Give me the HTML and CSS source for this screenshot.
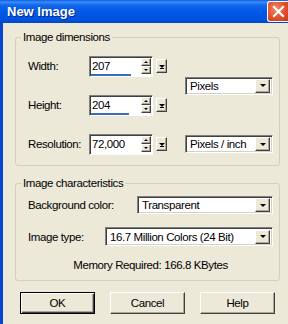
FILE: index.html
```html
<!DOCTYPE html>
<html lang="en">
<head>
    <meta charset="UTF-8">
    <title>New Image</title>
    <link rel="stylesheet" href="styles.css">
</head>
<body>
    <div class="window">
        <div class="titlebar">
            <span class="title">New Image</span>
            <span class="close">
                <svg width="13" height="13" viewBox="0 0 13 13"><path d="M2 2 L11 11 M11 2 L2 11" stroke="#fff" stroke-width="2.2" stroke-linecap="square"/></svg>
            </span>
        </div>
        <div class="client">
            <fieldset class="group dims">
                <legend>Image dimensions</legend>
                <div class="dims-grid">
                    <label class="lbl r1">Width:</label>
                    <div class="spin r1">
                        <div class="field">
                            <span class="val">207</span>
                            <div class="updown"><span class="ud up"><b></b></span><span class="ud down"><b></b></span></div>
                            <i class="bar" style="width:40px"></i>
                        </div>
                        <span class="endbtn"><b></b></span>
                    </div>
                    <label class="lbl r2">Height:</label>
                    <div class="spin r2">
                        <div class="field">
                            <span class="val">204</span>
                            <div class="updown"><span class="ud up"><b></b></span><span class="ud down"><b></b></span></div>
                            <i class="bar" style="width:38px"></i>
                        </div>
                        <span class="endbtn"><b></b></span>
                    </div>
                    <label class="lbl r3">Resolution:</label>
                    <div class="spin r3">
                        <div class="field">
                            <span class="val">72,000</span>
                            <div class="updown"><span class="ud up"><b></b></span><span class="ud down"><b></b></span></div>
                        </div>
                        <span class="endbtn"><b></b></span>
                    </div>
                    <div class="combo units"><span class="text">Pixels</span><span class="drop"><b></b></span></div>
                    <div class="combo res-units"><span class="text">Pixels / inch</span><span class="drop"><b></b></span></div>
                </div>
            </fieldset>

            <fieldset class="group chars">
                <legend>Image characteristics</legend>
                <div class="row">
                    <label class="lbl">Background color:</label>
                    <div class="combo bg"><span class="text">Transparent</span><span class="drop"><b></b></span></div>
                </div>
                <div class="row">
                    <label class="lbl">Image type:</label>
                    <div class="combo type"><span class="text">16.7 Million Colors (24 Bit)</span><span class="drop"><b></b></span></div>
                </div>
                <p class="memory">Memory Required: 166.8 KBytes</p>
            </fieldset>

            <div class="buttons">
                <button class="btn default">OK</button>
                <button class="btn">Cancel</button>
                <button class="btn">Help</button>
            </div>
        </div>
    </div>
</body>
</html>
```

FILE: styles.css
```css
body {
    margin: 0;
    font-family: "Liberation Sans", Arial, sans-serif;
    font-size: 11.5px;
    letter-spacing: -0.4px;
    color: #000;
    background: #ece9d8;
}
.window {
    width: 288px;
    height: 324px;
    overflow: hidden;
}
.titlebar {
    height: 23px;
    display: flex;
    align-items: center;
    justify-content: space-between;
    padding-left: 7px;
    background: linear-gradient(#0a5ee6 0, #3d8df7 2px, #1467ea 5px, #0058e6 50%, #0053de 85%, #0046c8 100%);
}
.title {
    color: #fff;
    font-weight: bold;
    font-size: 13px;
    letter-spacing: 0;
    text-shadow: 1px 1px #0a2a8a;
}
.close {
    width: 21px;
    height: 21px;
    margin-top: -1px;
    box-sizing: border-box;
    border: 1px solid #fff;
    border-right: none;
    border-radius: 3px 0 0 3px;
    background: radial-gradient(circle at 40% 35%, #f08a68 0, #e0502c 55%, #c7381a 100%);
    display: flex;
    align-items: center;
    padding-left: 4px;
}
.client {
    height: 301px;
    border-left: 3px solid #0a44d2;
    padding: 0 8px 0 12px;
    overflow: hidden;
}

/* group boxes */
.group {
    margin: 8px 0 0 0;
    border: 1px solid #d0d0bf;
    border-radius: 3px;
    padding: 11px 6px 10px 12px;
}
.group legend {
    padding: 0 2px;
    margin-left: -7px;
    line-height: 13px;
}
.dims-grid {
    display: grid;
    grid-template-columns: 61px 78px 1fr;
    grid-template-rows: 22px 22px 22px;
    row-gap: 17px;
}
.lbl {
    align-self: center;
}
.r1 { grid-row: 1; }
.r2 { grid-row: 2; }
.r3 { grid-row: 3; }

/* spin fields */
.spin {
    grid-column: 2;
    display: flex;
    align-items: center;
    gap: 3px;
}
.field {
    position: relative;
    width: 64px;
    height: 21px;
    box-sizing: border-box;
    background: #fff;
    border-top: 1px solid #808080;
    border-left: 1px solid #808080;
    border-bottom: 1px solid #fff;
    border-right: 1px solid #fff;
    box-shadow: inset 1px 1px #404040;
    display: flex;
    align-items: center;
    padding: 0 1px 0 2px;
}
.val {
    flex: 1;
}
.updown {
    display: flex;
    flex-direction: column;
}
.ud, .endbtn, .drop {
    box-sizing: border-box;
    background: #ece9d8;
    border-top: 1px solid #fff;
    border-left: 1px solid #fff;
    border-right: 1px solid #404040;
    border-bottom: 1px solid #404040;
    box-shadow: inset -1px -1px #aca899;
    display: flex;
    align-items: center;
    justify-content: center;
}
.ud {
    width: 10px;
    height: 8px;
}
.up b {
    border-left: 2px solid transparent;
    border-right: 2px solid transparent;
    border-bottom: 2px solid #000;
}
.down b {
    border-left: 2px solid transparent;
    border-right: 2px solid transparent;
    border-top: 2px solid #000;
}
.bar {
    position: absolute;
    left: 1px;
    bottom: 0;
    height: 2px;
    background: #3d6db7;
}
.endbtn {
    width: 11px;
    height: 14px;
}
.endbtn b {
    width: 0;
    border-left: 3px solid transparent;
    border-right: 3px solid transparent;
    border-top: 3px solid #000;
    position: relative;
    box-shadow: 0 2px 0 -1px #000;
}

/* combo boxes */
.combo {
    height: 18px;
    box-sizing: border-box;
    background: #fff;
    border-top: 1px solid #808080;
    border-left: 1px solid #808080;
    border-bottom: 1px solid #fff;
    border-right: 1px solid #fff;
    box-shadow: inset 1px 1px #404040, inset -1px -1px #d4d0c8;
    display: flex;
    align-items: center;
    padding: 1px 2px 1px 4px;
}
.combo .text {
    flex: 1;
    white-space: nowrap;
}
.drop {
    width: 15px;
    height: 14px;
}
.drop b {
    border-left: 3px solid transparent;
    border-right: 3px solid transparent;
    border-top: 3px solid #000;
}
.units {
    grid-column: 3;
    grid-row: 1 / 3;
    align-self: center;
    justify-self: end;
    width: 88px;
}
.res-units {
    grid-column: 3;
    grid-row: 3;
    align-self: center;
    justify-self: end;
    width: 88px;
}

.chars {
    margin-top: 11px;
    padding: 6px 6px 8px 12px;
}
.chars .row {
    display: flex;
    justify-content: space-between;
    align-items: center;
    margin-bottom: 13px;
}
.bg { width: 136px; }
.type { width: 168px; height: 19px; }
.memory {
    margin: 0;
    text-align: center;
    line-height: 13px;
}

/* buttons */
.buttons {
    display: flex;
    gap: 15px;
    margin-top: 11px;
    padding-left: 5px;
}
.btn {
    width: 75px;
    height: 22px;
    font-family: inherit;
    font-size: 11.5px;
    letter-spacing: -0.4px;
    color: #000;
    background: #ece9d8;
    border-top: 1px solid #fff;
    border-left: 1px solid #fff;
    border-right: 1px solid #404040;
    border-bottom: 1px solid #404040;
    box-shadow: inset -1px -1px #aca899;
    padding: 0;
}
.btn.default {
    border: 1px solid #000;
    box-shadow: inset 1px 1px #fff, inset -1px -1px #404040, inset -2px -2px #aca899;
}
```
